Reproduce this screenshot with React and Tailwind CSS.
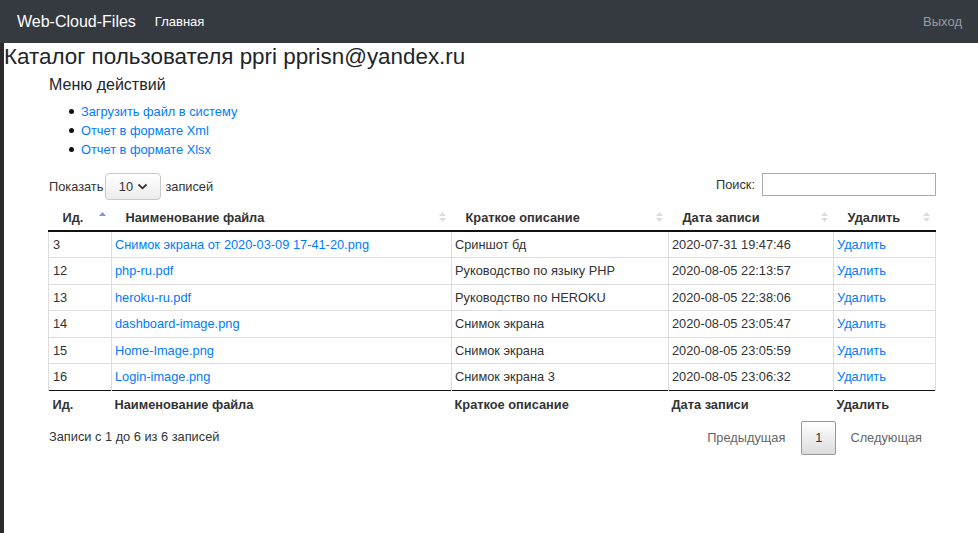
import React from "react";

const rows = [
  ["3", "Снимок экрана от 2020-03-09 17-41-20.png", "Сриншот бд", "2020-07-31 19:47:46"],
  ["12", "php-ru.pdf", "Руководство по языку PHP", "2020-08-05 22:13:57"],
  ["13", "heroku-ru.pdf", "Руководство по HEROKU", "2020-08-05 22:38:06"],
  ["14", "dashboard-image.png", "Снимок экрана", "2020-08-05 23:05:47"],
  ["15", "Home-Image.png", "Снимок экрана", "2020-08-05 23:05:59"],
  ["16", "Login-image.png", "Снимок экрана 3", "2020-08-05 23:06:32"],
];

const menu = ["Загрузить файл в систему", "Отчет в формате Xml", "Отчет в формате Xlsx"];

function SortIcon({ active }) {
  return (
    <svg width="7" height="12" viewBox="0 0 7 12" className="absolute right-[6px] top-[6px]">
      <path d="M3.5 1 L7 5 L0 5 Z" fill={active ? "#8193e0" : "#dcdcdc"} />
      {!active && <path d="M3.5 11 L7 7 L0 7 Z" fill="#dcdcdc" />}
    </svg>
  );
}

function HeadCell({ children, className = "", active }) {
  return (
    <th className={`relative text-left font-bold pl-[14px] pr-[18px] h-[26px] align-middle ${className}`}>
      {children}
      <SortIcon active={active} />
    </th>
  );
}

const td = "border-t border-l border-r border-[#ddd]";

export default function App() {
  return (
    <div className="min-h-[533px] bg-white text-[12.8px] text-[#333]" style={{ fontFamily: '"Liberation Sans", Arial, sans-serif' }}>
      <nav className="h-[43px] bg-[#343a40] flex items-center pl-[17px] pr-[16px]">
        <span className="text-white text-[16px] mr-[19px]">Web-Cloud-Files</span>
        <span className="text-white text-[13px]">Главная</span>
        <span className="ml-auto text-[#9a9da0] text-[13px]">Выход</span>
      </nav>
      <div className="border-l-4 border-[#2b2b2b] min-h-[490px]">
        <h1 className="text-[22.4px] leading-[26px] text-[#212529] pt-[1px]">
          Каталог пользователя ppri pprisn@yandex.ru
        </h1>
        <div className="pl-[45px] pr-[42px]">
          <h2 className="text-[16px] leading-[20px] text-[#212529] mt-[5px]">Меню действий</h2>
          <ul className="pl-[20px] mt-[7px] leading-[19px]">
            {menu.map((m) => (
              <li key={m} className="flex items-center">
                <span className="w-[5px] h-[5px] rounded-full bg-[#111] mr-[7px]" />
                <span className="text-[#007bff]">{m}</span>
              </li>
            ))}
          </ul>
          <div className="flex items-start justify-between mt-[14px]">
            <div className="flex items-center">
              <span>Показать</span>
              <span className="ml-[2px] mr-[4px] w-[56px] h-[27px] flex items-center justify-center gap-[4px] border border-[#c8c8c8] rounded-[4px] bg-gradient-to-b from-white to-[#ececec] text-[#333]">
                10
                <svg width="11" height="7" viewBox="0 0 11 7">
                  <path d="M1.5 1.5 L5.5 5.3 L9.5 1.5" fill="none" stroke="#333" strokeWidth="1.8" />
                </svg>
              </span>
              <span>записей</span>
            </div>
            <div className="flex items-center">
              <span className="mr-[7px]">Поиск:</span>
              <span className="w-[174px] h-[23px] border border-[#aaa] bg-white block" />
            </div>
          </div>
          <table className="w-[888px] border-collapse mt-[5px] -ml-[1px]">
            <thead>
              <tr className="border-b-2 border-[#111]">
                <HeadCell className="w-[63px]" active>Ид.</HeadCell>
                <HeadCell className="w-[340px]">Наименование файла</HeadCell>
                <HeadCell className="w-[217px]">Краткое описание</HeadCell>
                <HeadCell className="w-[165px]">Дата записи</HeadCell>
                <HeadCell>Удалить</HeadCell>
              </tr>
            </thead>
            <tbody>
              {rows.map((r) => (
                <tr key={r[0]} className="h-[26.5px]">
                  <td className={`${td} px-[4px]`}>{r[0]}</td>
                  <td className={`${td} px-[3px] text-[#007bff]`}>{r[1]}</td>
                  <td className={`${td} px-[3px]`}>{r[2]}</td>
                  <td className={`${td} px-[3px]`}>{r[3]}</td>
                  <td className={`${td} px-[3px] text-[#007bff]`}>Удалить</td>
                </tr>
              ))}
            </tbody>
            <tfoot>
              <tr className="h-[28px] font-bold">
                <td className="border-t border-[#111] px-[4px] pt-[1px]">Ид.</td>
                <td className="border-t border-[#111] px-[3px] pt-[1px]">Наименование файла</td>
                <td className="border-t border-[#111] px-[3px] pt-[1px]">Краткое описание</td>
                <td className="border-t border-[#111] px-[3px] pt-[1px]">Дата записи</td>
                <td className="border-t border-[#111] px-[3px] pt-[1px]">Удалить</td>
              </tr>
            </tfoot>
          </table>
          <div className="flex items-center justify-between mt-[3px]">
            <span className="mt-[-2px]">Записи с 1 до 6 из 6 записей</span>
            <div className="flex items-center text-[#666]">
              <span className="pl-[14px] pr-[16px]">Предыдущая</span>
              <span className="w-[35px] h-[34px] flex items-center justify-center border border-[#979797] rounded-[2px] bg-gradient-to-b from-white to-[#dcdcdc] text-[#333]">1</span>
              <span className="px-[14px]">Следующая</span>
            </div>
          </div>
        </div>
      </div>
    </div>
  );
}
